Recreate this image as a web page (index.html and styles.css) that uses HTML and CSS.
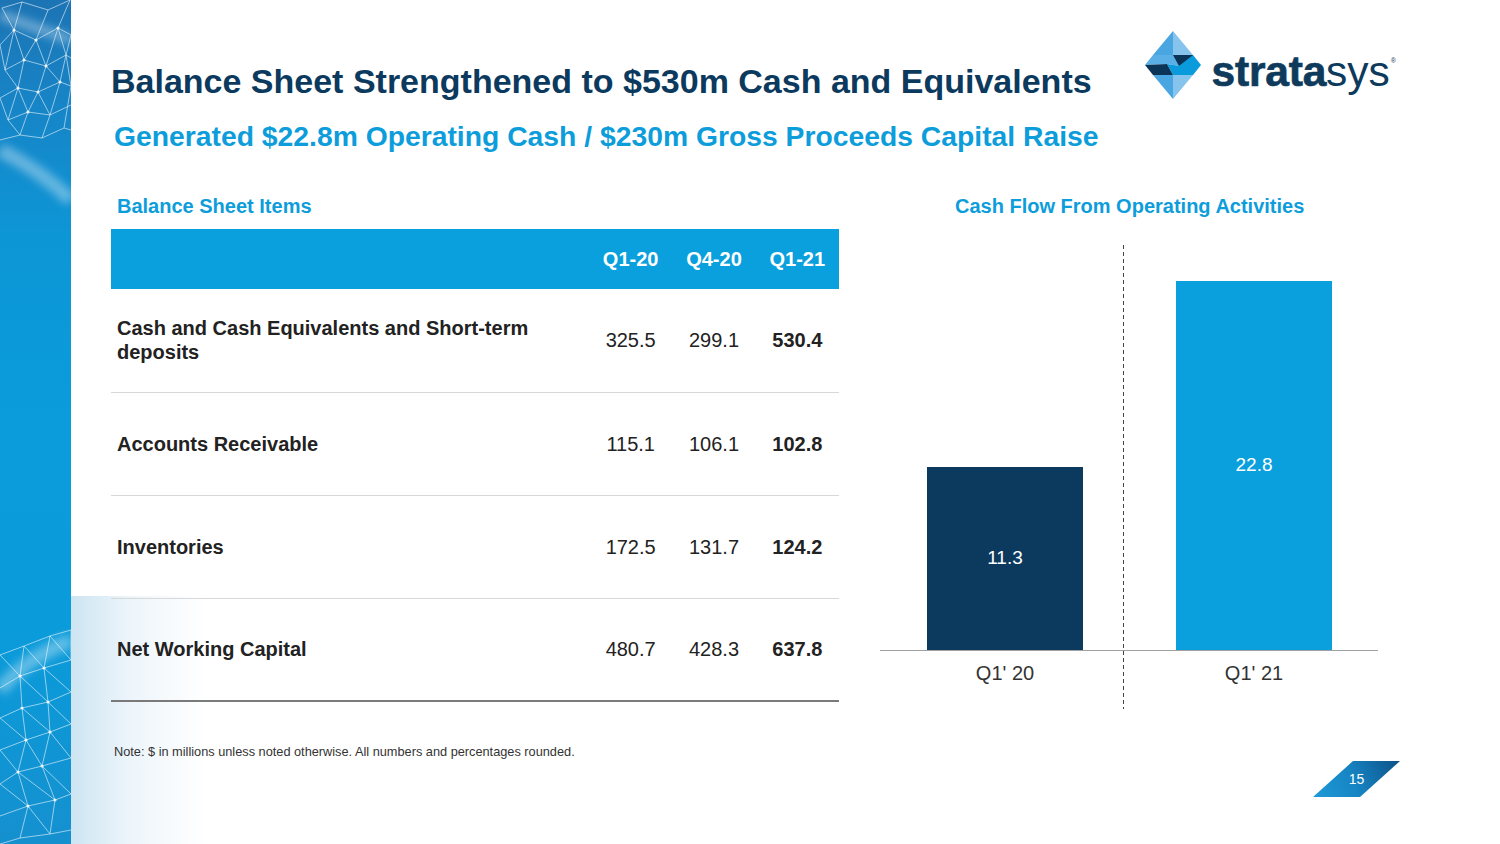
FILE: index.html
```html
<!DOCTYPE html>
<html lang="en">
<head>
<meta charset="utf-8">
<title>Balance Sheet</title>
<link rel="stylesheet" href="styles.css">
</head>
<body>
<div class="page">
  <aside class="strip">
    <svg class="net" width="210" height="844" viewBox="0 0 210 844" aria-hidden="true">
      <defs>
        <filter id="blur4"><feGaussianBlur stdDeviation="4"/></filter>
        <filter id="blur1"><feGaussianBlur stdDeviation="0.6"/></filter>
      </defs>
      <g filter="url(#blur4)" opacity="0.35">
        <path d="M0 150 C20 160 45 175 71 200" stroke="#fff" stroke-width="14" fill="none"/>
        <path d="M0 15 L71 40" stroke="#fff" stroke-width="10" fill="none"/>
        <path d="M0 690 C25 660 50 650 71 640" stroke="#fff" stroke-width="14" fill="none"/>
      </g>
      <g stroke="#ffffff" stroke-opacity="0.55" stroke-width="1" fill="none" filter="url(#blur1)">
        <path d="M2 8 L22 2 L48 10 L70 0 M0 45 L14 30 L36 40 L58 28 L71 35 M5 70 L24 60 L46 66 L66 55 L71 58 M0 98 L18 88 L38 92 L60 82 L71 86 M8 120 L28 112 L50 115 L71 105 M0 140 L20 135 L42 138 L64 128 L71 130"/>
        <path d="M2 8 L14 30 L5 70 L18 88 L8 120 L20 135 M22 2 L14 30 L24 60 L18 88 L28 112 L20 135 M48 10 L36 40 L24 60 M36 40 L46 66 L38 92 L28 112 M58 28 L46 66 M58 28 L66 55 L60 82 L50 115 L42 138 M70 0 L58 28 M71 35 L66 55 M46 66 L60 82 M38 92 L50 115 M66 55 L71 86 L64 128 M0 45 L5 70 M0 98 L8 120"/>
        <path d="M0 655 L24 646 L50 636 L71 630 M0 688 L20 676 L44 668 L71 660 M0 718 L22 708 L48 702 L71 692 M0 750 L26 740 L50 732 L71 724 M0 784 L18 772 L42 766 L71 758 M0 816 L28 806 L55 800 L71 794 M0 844 L20 838 L50 834 L71 830"/>
        <path d="M24 646 L20 676 L22 708 L26 740 L18 772 L28 806 L20 838 M50 636 L44 668 L48 702 L50 732 L42 766 L55 800 L50 834 M71 630 L71 660 M0 655 L20 676 L48 702 L71 724 M24 646 L44 668 L71 692 M0 718 L26 740 L42 766 L71 794 M22 708 L50 732 L71 758 M0 784 L28 806 L50 834 M18 772 L55 800 M0 750 L18 772 M50 636 L71 660"/>
      </g>
      <g fill="#ffffff" fill-opacity="0.8">
        <circle cx="14" cy="30" r="1.6"/><circle cx="36" cy="40" r="1.6"/><circle cx="58" cy="28" r="1.6"/>
        <circle cx="24" cy="60" r="1.6"/><circle cx="46" cy="66" r="1.6"/><circle cx="18" cy="88" r="1.6"/>
        <circle cx="38" cy="92" r="1.6"/><circle cx="60" cy="82" r="1.6"/><circle cx="28" cy="112" r="1.6"/>
        <circle cx="20" cy="676" r="1.6"/><circle cx="44" cy="668" r="1.6"/><circle cx="22" cy="708" r="1.6"/>
        <circle cx="48" cy="702" r="1.6"/><circle cx="26" cy="740" r="1.6"/><circle cx="50" cy="732" r="1.6"/>
        <circle cx="18" cy="772" r="1.6"/><circle cx="42" cy="766" r="1.6"/><circle cx="28" cy="806" r="1.6"/>
        <circle cx="55" cy="800" r="1.6"/>
      </g>
      <g stroke="#ffffff" stroke-opacity="0.8" stroke-width="1" fill="none">
        <path d="M71 692 L95 686 L125 690 L150 700 M71 724 L100 716 L128 722 L160 735 M71 758 L98 750 L130 756 L165 770 M71 794 L105 786 L140 792 L180 805 M71 830 L110 824 L150 830 L190 840 M95 686 L100 716 L98 750 L105 786 L110 824 M125 690 L128 722 L130 756 L140 792 L150 830 M71 660 L95 686 L128 722 L165 770 M100 716 L130 756 L180 805"/>
      </g>
    </svg>
  </aside>

  <main class="slide">
    <header class="head">
      <div class="titles">
        <h1 class="title">Balance Sheet Strengthened to $530m Cash and Equivalents</h1>
        <h2 class="subtitle">Generated $22.8m Operating Cash / $230m Gross Proceeds Capital Raise</h2>
      </div>
      <div class="logo">
        <svg class="logo-mark" width="56" height="68" viewBox="0 0 56 68" aria-hidden="true">
          <polygon points="28,0 28,24 8,24" fill="#4aa6e0"/>
          <polygon points="28,0 48,24 28,24" fill="#86c4ee"/>
          <polygon points="8,24 28,24 35,35 22,33 0,34" fill="#5aafe6"/>
          <polygon points="28,24 48,24 56,34 48,44 28,44 22,33 35,35" fill="#0a9bdc"/>
          <polygon points="28,24 48,24 34,35" fill="#0b3558"/>
          <polygon points="0,34 22,33 28,44 8,44" fill="#0b3558"/>
          <polygon points="8,44 28,44 28,68" fill="#4aa6e0"/>
          <polygon points="28,44 48,44 28,68" fill="#86c4ee"/>
        </svg>
        <span class="logo-text"><span class="logo-bold">strata</span>sys<span class="reg">®</span></span>
      </div>
    </header>

    <div class="content">
      <section class="bs">
        <h3 class="section-title">Balance Sheet Items</h3>
        <table class="sheet">
          <thead>
            <tr>
              <th class="lbl"></th>
              <th class="num">Q1-20</th>
              <th class="num">Q4-20</th>
              <th class="num">Q1-21</th>
            </tr>
          </thead>
          <tbody>
            <tr>
              <td class="lbl">Cash and Cash Equivalents and Short-term<br>deposits</td>
              <td class="num">325.5</td>
              <td class="num">299.1</td>
              <td class="num strong">530.4</td>
            </tr>
            <tr>
              <td class="lbl">Accounts Receivable</td>
              <td class="num">115.1</td>
              <td class="num">106.1</td>
              <td class="num strong">102.8</td>
            </tr>
            <tr>
              <td class="lbl">Inventories</td>
              <td class="num">172.5</td>
              <td class="num">131.7</td>
              <td class="num strong">124.2</td>
            </tr>
            <tr class="last">
              <td class="lbl">Net Working Capital</td>
              <td class="num">480.7</td>
              <td class="num">428.3</td>
              <td class="num strong">637.8</td>
            </tr>
          </tbody>
        </table>
        <p class="note">Note: $ in millions unless noted otherwise. All numbers and percentages rounded.</p>
      </section>

      <section class="cf">
        <h3 class="section-title cf-title">Cash Flow From Operating Activities</h3>
        <div class="plot">
          <div class="col col-a">
            <div class="bar-area">
              <div class="bar bar-dark" style="height:183px">11.3</div>
            </div>
            <div class="xlabel"><span class="xtext">Q1' 20</span></div>
          </div>
          <div class="col col-b">
            <div class="bar-area">
              <div class="bar bar-light" style="height:369px">22.8</div>
            </div>
            <div class="xlabel"><span class="xtext">Q1' 21</span></div>
          </div>
        </div>
      </section>
    </div>

    <div class="foot">
      <div class="pagenum">15</div>
    </div>
  </main>
</div>
</body>
</html>
```

FILE: styles.css
```css
* { box-sizing: border-box; }

html, body {
  margin: 0;
  padding: 0;
}

body {
  width: 1500px;
  height: 844px;
  overflow: hidden;
  background: #ffffff;
  font-family: "Liberation Sans", Arial, sans-serif;
  color: #222222;
}

.page {
  display: flex;
  width: 1500px;
  height: 844px;
}

/* left decorative strip */
.strip {
  flex: 0 0 71px;
  width: 71px;
  min-width: 0;
  height: 844px;
  background: linear-gradient(180deg, #1c74b4 0%, #1784c6 12%, #0d96d6 28%, #0a9cdb 50%, #0a9bda 75%, #1590cf 100%);
  overflow: visible;
}

.net {
  display: block;
  overflow: visible;
}

/* main slide */
.slide {
  flex: 1 1 auto;
  min-width: 0;
  height: 844px;
  padding: 0 100px 0 40px;
  background:
    linear-gradient(90deg, rgba(196, 224, 240, 0.85) 0px, rgba(225, 239, 248, 0.6) 60px, rgba(255, 255, 255, 0) 135px) 0 596px / 140px 248px no-repeat,
    #ffffff;
}

.head {
  display: flex;
  align-items: flex-start;
  justify-content: space-between;
  padding-top: 31px;
  padding-right: 4px;
}

.titles {
  margin-top: 30px;
}

.title {
  margin: 0;
  font-size: 34px;
  line-height: 40px;
  font-weight: 700;
  color: #0c3a5e;
  white-space: nowrap;
}

.subtitle {
  margin: 19px 0 0 3px;
  font-size: 28.3px;
  line-height: 32px;
  font-weight: 700;
  color: #0d9ddb;
  white-space: nowrap;
}

.logo {
  display: flex;
  align-items: center;
  gap: 11px;
}

.logo-mark {
  display: block;
}

.logo-text {
  font-size: 42.5px;
  line-height: 40px;
  color: #0e3a5c;
  font-weight: 400;
  letter-spacing: 0px;
  white-space: nowrap;
  margin-top: 2px;
}

.logo-bold {
  font-weight: 700;
  letter-spacing: -0.2px;
  -webkit-text-stroke: 0.7px #0e3a5c;
}

.reg {
  font-size: 7px;
  vertical-align: 23px;
  margin-left: 1px;
}

/* content */
.content {
  display: flex;
  align-items: flex-start;
  gap: 41px;
  margin-top: 42px;
}

.bs {
  width: 728px;
  flex: 0 0 728px;
}

.section-title {
  margin: 0;
  padding-left: 6px;
  font-size: 20px;
  line-height: 24px;
  font-weight: 700;
  color: #0d9ddb;
  white-space: nowrap;
}

.sheet {
  margin-top: 11px;
  width: 728px;
  border-collapse: collapse;
  table-layout: fixed;
}

.sheet th.lbl,
.sheet td.lbl {
  width: 478px;
}

.sheet th {
  height: 60px;
  background: #0a9fdd;
  color: #ffffff;
  font-size: 20px;
  font-weight: 700;
  padding: 0;
}

.sheet th.num {
  text-align: center;
}

.sheet td {
  height: 103px;
  border-bottom: 1px solid #d8d8d8;
  font-size: 20px;
  line-height: 24px;
  padding: 0;
  vertical-align: middle;
}

.sheet td.lbl {
  padding-left: 6px;
  font-weight: 700;
  color: #222222;
}

.sheet td.num {
  text-align: center;
  color: #222222;
}

.sheet td.strong {
  font-weight: 700;
}

.sheet tr.last td {
  border-bottom: 2px solid #7a7a7a;
}

.note {
  margin: 42px 0 0 3px;
  font-size: 12.75px;
  line-height: 16px;
  color: #333333;
  white-space: nowrap;
}

/* chart */
.cf {
  width: 498px;
  flex: 0 0 498px;
}

.cf-title {
  padding-left: 75px;
}

.plot {
  display: grid;
  grid-template-columns: 243px 255px;
  margin-top: 27px;
}

.col {
  display: flex;
  flex-direction: column;
}

.col-b {
  background: repeating-linear-gradient(180deg, #444444 0px, #444444 4px, transparent 4px, transparent 7px) 0 0 / 1.4px 100% no-repeat;
}

.bar-area {
  height: 405.5px;
  display: flex;
  align-items: flex-end;
  border-bottom: 1.5px solid #a0a0a0;
}

.col-a .bar-area,
.col-a .xlabel {
  padding-left: 47px;
}

.col-b .bar-area,
.col-b .xlabel {
  padding-left: 53px;
}

.bar {
  width: 156px;
  display: flex;
  align-items: center;
  justify-content: center;
  color: #ffffff;
  font-size: 19px;
}

.bar-dark {
  background: #0b3a5e;
}

.bar-light {
  background: #0a9fdd;
}

.xlabel {
  height: 58px;
  padding-top: 10.5px;
  font-size: 20px;
  line-height: 24px;
  color: #333333;
}

.xtext {
  display: block;
  width: 156px;
  text-align: center;
}

/* footer */
.foot {
  display: flex;
  justify-content: flex-end;
  margin-top: 1px;
}

.pagenum {
  width: 87px;
  height: 36px;
  clip-path: polygon(40px 0, 87px 0, 47px 100%, 0 100%);
  background: linear-gradient(65deg, #1e9ad8 0%, #1785c4 45%, #0c5288 100%);
  color: #ffffff;
  font-size: 14px;
  line-height: 36px;
  text-align: center;
  padding-left: 0;
}
```
